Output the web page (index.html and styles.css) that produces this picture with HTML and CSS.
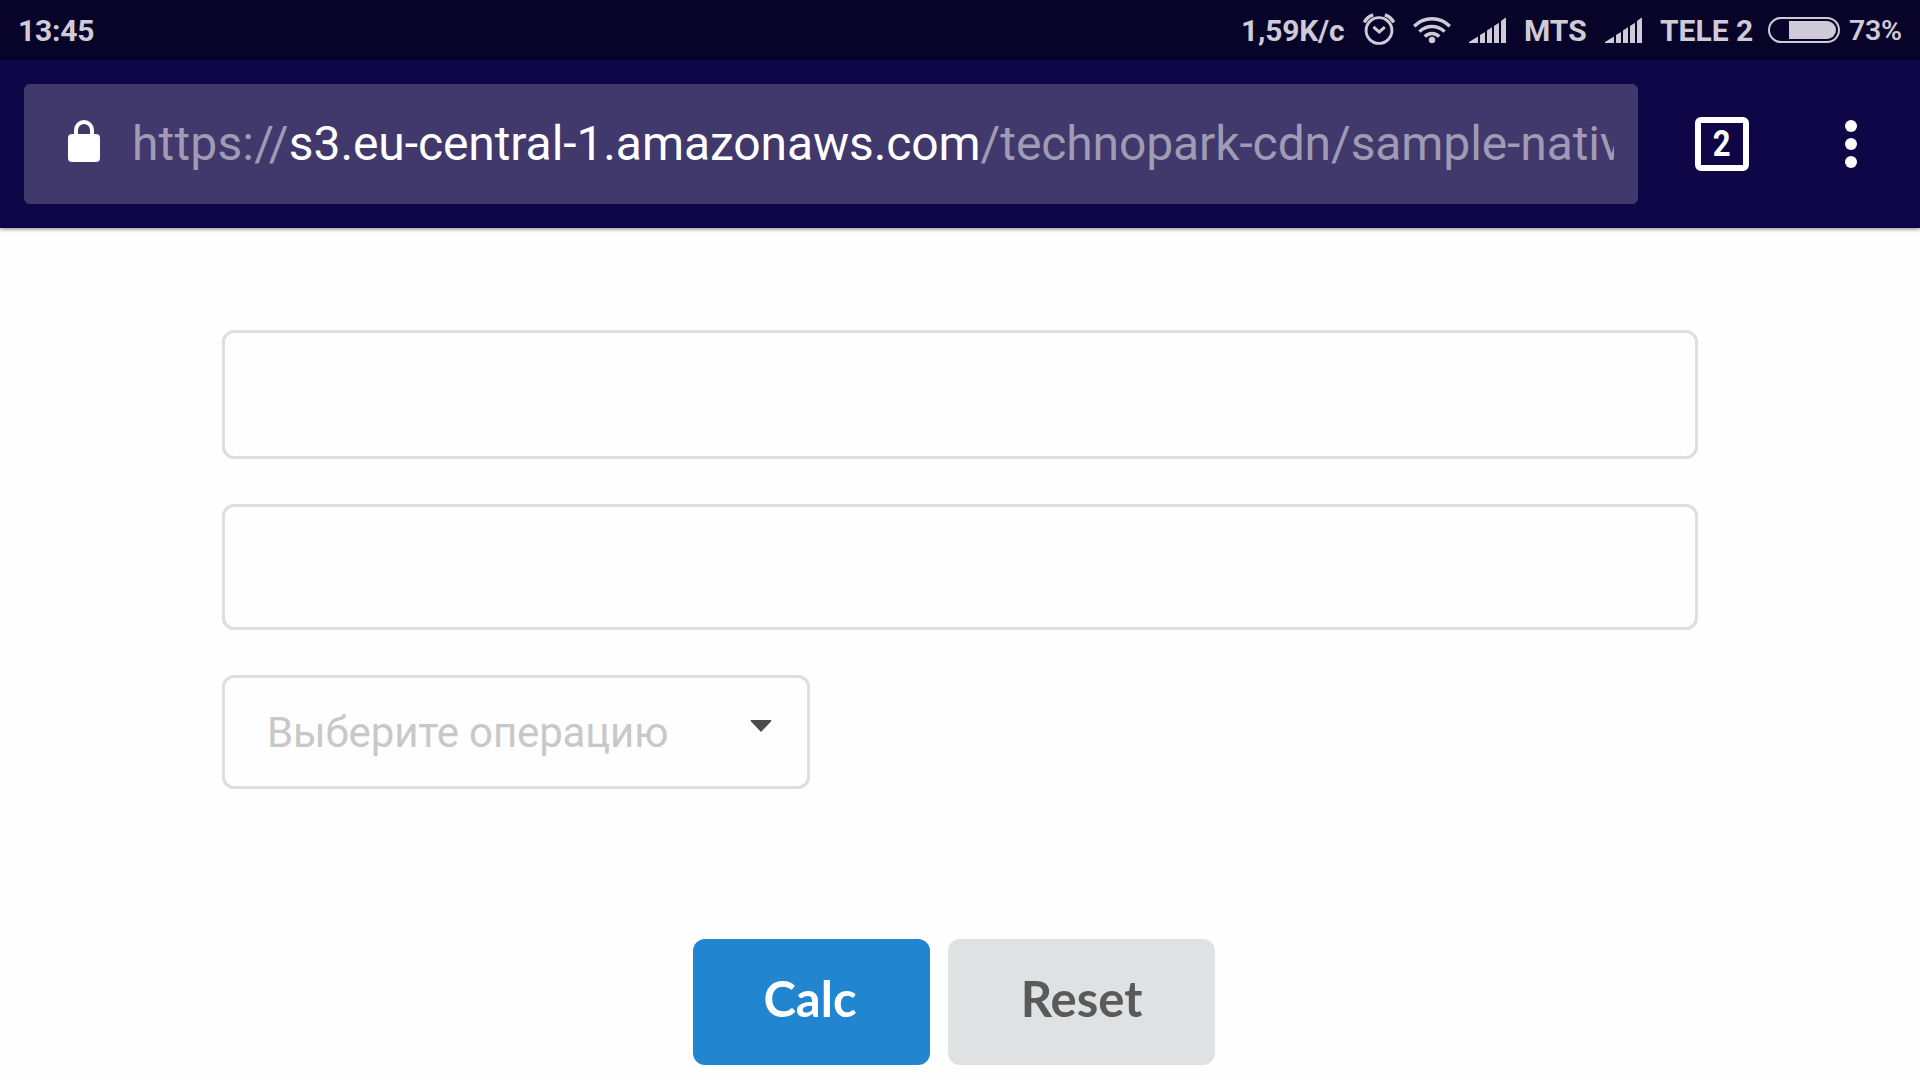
FILE: index.html
```html
<!DOCTYPE html>
<html lang="ru">
<head>
<meta charset="utf-8">
<title>Calc</title>
<link rel="stylesheet" href="styles.css">
</head>
<body>
<header class="status-bar">
  <span class="clock">13:45</span>
  <div class="status-right">
    <span class="net-speed">1,59K/c</span>
    <svg class="alarm" viewBox="0 0 32 32" width="32" height="32" fill="none" stroke="currentColor">
      <circle cx="16" cy="17.500" r="12.900" stroke-width="2.900"/>
      <path d="M10.500 13.800 16.200 19 21.800 14.200" stroke-width="3"/>
      <path d="M1.300 9.500Q4 4 10.200 1.900M30.700 9.500Q28 4 21.800 1.900" stroke-width="3.400"/>
    </svg>
    <svg class="wifi" viewBox="0 0 38 28" width="38" height="28" fill="none" stroke="currentColor" stroke-width="3.400">
      <circle cx="19" cy="24" r="3.200" fill="currentColor" stroke="none"/>
      <path d="M1.200 10.200A25 25 0 0 1 36.800 10.200M6.400 15.600A18 18 0 0 1 31.600 15.600M11.800 20.600A10 10 0 0 1 26.200 20.600"/>
    </svg>
    <svg class="signal" viewBox="0 0 37 25" width="37" height="25" fill="currentColor">
      <path d="M0 24 9 18.500V25H0zM11 17 16 14V25H11zM18 12.500 23 9.300V25H18zM25 8 30 4.700V25H25zM32 3 36 0H37V25H32z"/>
    </svg>
    <span class="carrier carrier-first">MTS</span>
    <svg class="signal" viewBox="0 0 37 25" width="37" height="25" fill="currentColor">
      <path d="M0 24 9 18.500V25H0zM11 17 16 14V25H11zM18 12.500 23 9.300V25H18zM25 8 30 4.700V25H25zM32 3 36 0H37V25H32z"/>
    </svg>
    <span class="carrier carrier-second">TELE 2</span>
    <svg class="battery" viewBox="0 0 72 26" width="72" height="26">
      <rect x="1" y="1" width="70" height="24" rx="12" fill="none" stroke="currentColor" stroke-width="2"/>
      <path d="M21 4H59A9 9 0 0 1 59 22H21z" fill="currentColor"/>
    </svg>
    <span class="percent">73%</span>
  </div>
</header>
<nav class="toolbar">
  <div class="url-bar">
    <svg class="lock" viewBox="0 0 32 42" width="32" height="42">
      <rect y="14" width="32" height="28" rx="4" fill="#fff"/>
      <path d="M8 16V10A8 8 0 0 1 24 10V16" fill="none" stroke="#fff" stroke-width="4"/>
    </svg>
    <div class="url"><span class="scheme">https://</span><span class="host">s3.eu-central-1.amazonaws.com</span>/technopark-cdn/sample-native</div>
  </div>
  <div class="tabs"><span class="tab-count">2</span></div>
  <svg class="menu" viewBox="0 0 12 48" width="12" height="48" fill="#fff">
    <circle cx="6" cy="6" r="6"/><circle cx="6" cy="24" r="6"/><circle cx="6" cy="42" r="6"/>
  </svg>
</nav>
<main class="page">
  <input class="field field-first" type="text">
  <input class="field field-second" type="text">
  <div class="dropdown">
    <span class="placeholder">Выберите операцию</span>
    <svg class="caret" viewBox="0 0 22 12" width="22" height="12"><path d="M1.500 0H20.500Q22 0 21 1.400L11 12 1 1.400Q0 0 1.500 0z" fill="#4d4d4d"/></svg>
  </div>
  <div class="actions">
    <button class="button primary">Calc</button>
    <button class="button secondary">Reset</button>
  </div>
</main>
</body>
</html>
```
FILE: styles.css
```css
* {
  box-sizing: border-box;
}

body {
  margin: 0;
  height: 1080px;
  overflow: hidden;
  background: #fefefe;
  font-family: Roboto, "Liberation Sans", sans-serif;
}

.status-bar {
  display: flex;
  justify-content: space-between;
  height: 60px;
  padding: 0 18px 0 18px;
  background: #080328;
  color: #cecbd6;
  font-size: 30px;
  font-weight: 700;
  line-height: 61px;
  white-space: nowrap;
}

.clock {
  letter-spacing: -0.2px;
}

.status-right {
  display: flex;
}

.status-right svg {
  display: block;
  flex: none;
}

.net-speed {
  width: 122px;
  letter-spacing: -0.2px;
}

.alarm {
  margin-top: 13px;
}

.wifi {
  margin: 16px 0 0 18px;
}

.signal {
  margin: 18px 0 0 18px;
}

.carrier {
  margin-left: 18px;
}

.carrier-first {
  width: 63px;
}

.carrier-second {
  width: 90px;
}

.battery {
  margin: 17px 0 0 18px;
}

.percent {
  width: 53px;
  margin-left: 9px;
  font-size: 28.5px;
  font-weight: 600;
  letter-spacing: -0.3px;
}

.toolbar {
  display: flex;
  align-items: center;
  height: 168px;
  padding: 0 63px 0 24px;
  background: #0f0647;
  box-shadow: 0 1px 4px rgba(0, 0, 0, 0.5);
}

.url-bar {
  display: flex;
  align-items: center;
  width: 1614px;
  height: 120px;
  padding: 0 24px 0 44px;
  border-radius: 6px;
  background: #41386b;
}

.lock {
  flex: none;
  margin-bottom: 6px;
}

.url {
  flex: 1;
  min-width: 0;
  margin-left: 32px;
  overflow: hidden;
  color: #9f9bb5;
  font-size: 48px;
  letter-spacing: -0.11px;
  line-height: 60px;
  white-space: nowrap;
}

.scheme {
  letter-spacing: 0.16px;
}

.host {
  color: #fff;
  letter-spacing: -0.085px;
}

.tabs {
  display: flex;
  align-items: center;
  justify-content: center;
  width: 54px;
  height: 54px;
  margin-left: 57px;
  border: 6px solid #fff;
  border-radius: 6px;
  color: #fff;
  font-size: 37px;
  font-weight: 700;
  line-height: 42px;
}

.tab-count {
  transform: scaleX(0.84);
}

.menu {
  margin-left: auto;
}

.page {
  display: flex;
  flex-direction: column;
  padding: 102px 222px 0;
}

.field {
  width: 100%;
  padding: 0 40px;
  border: 3px solid #dedede;
  border-radius: 12px;
  background: #fefefe;
  font: 42px Roboto, sans-serif;
}

.field-first {
  height: 129px;
}

.field-second {
  height: 126px;
  margin-top: 45px;
}

.dropdown {
  display: flex;
  align-items: flex-start;
  justify-content: space-between;
  width: 588px;
  height: 114px;
  margin-top: 45px;
  padding: 0 35px 0 42px;
  border: 3px solid #dedede;
  border-radius: 12px;
  background: #fefefe;
}

.placeholder {
  color: #c8c8c8;
  font-size: 42px;
  letter-spacing: -0.14px;
  line-height: 110px;
}

.caret {
  margin-top: 42px;
}

.actions {
  display: flex;
  gap: 18px;
  margin: 150px 0 0 471px;
}

.button {
  height: 126px;
  padding: 0 0 9px;
  border: 0;
  border-radius: 12px;
  font: 700 49px/58px Lato, sans-serif;
}

.primary {
  width: 237px;
  padding-right: 3px;
  background: #2185d0;
  color: #fff;
}

.secondary {
  width: 267px;
  background: #e0e1e2;
  color: #5a5a5a;
}
```
